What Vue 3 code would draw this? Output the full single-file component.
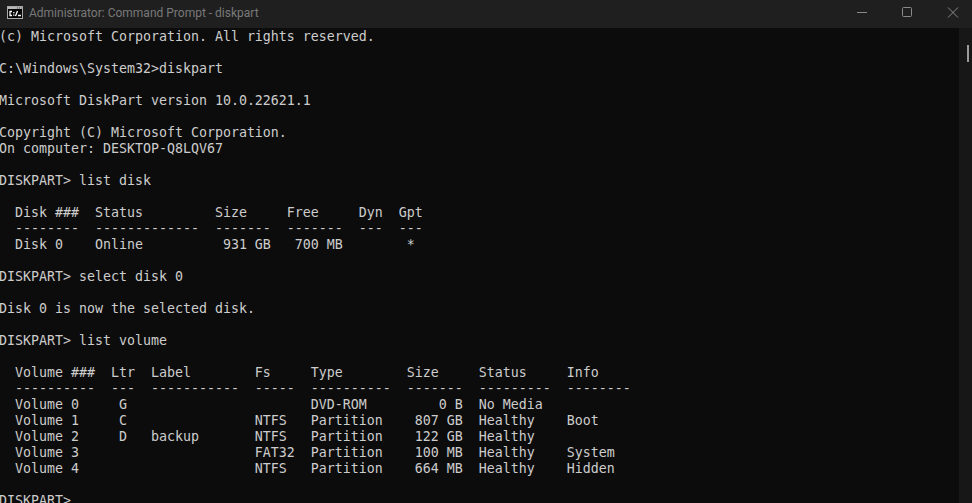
<script setup>
const title = 'Administrator: Command Prompt - diskpart'
const output = `(c) Microsoft Corporation. All rights reserved.

C:\\Windows\\System32>diskpart

Microsoft DiskPart version 10.0.22621.1

Copyright (C) Microsoft Corporation.
On computer: DESKTOP-Q8LQV67

DISKPART> list disk

  Disk ###  Status         Size     Free     Dyn  Gpt
  --------  -------------  -------  -------  ---  ---
  Disk 0    Online          931 GB   700 MB        *

DISKPART> select disk 0

Disk 0 is now the selected disk.

DISKPART> list volume

  Volume ###  Ltr  Label        Fs     Type        Size     Status     Info
  ----------  ---  -----------  -----  ----------  -------  ---------  --------
  Volume 0     G                       DVD-ROM         0 B  No Media
  Volume 1     C                NTFS   Partition    807 GB  Healthy    Boot
  Volume 2     D   backup       NTFS   Partition    122 GB  Healthy
  Volume 3                      FAT32  Partition    100 MB  Healthy    System
  Volume 4                      NTFS   Partition    664 MB  Healthy    Hidden

DISKPART> `
</script>

<template>
  <div class="window">
    <header class="titlebar">
      <div class="title-left">
        <svg class="app-icon" width="16" height="13" viewBox="0 0 16 13">
          <rect x="0.5" y="0.5" width="15" height="12" fill="#050505" stroke="#a8a8a8" />
          <rect x="1" y="1" width="14" height="2" fill="#b8b8b8" />
          <path d="M10 2h1M12 2h1M14 2h.6" stroke="#444" fill="none" />
          <path d="M5 5.5H3V9.5H5M6.8 6v1.2M6.8 8.5v1.2M10.5 5L8.5 10M11 9.5h3" fill="none" stroke="#ffffff" stroke-width="1.3" />
        </svg>
        <span class="title-text">{{ title }}</span>
      </div>
      <div class="controls">
        <svg width="46" height="28" viewBox="0 0 46 28"><path d="M18 12.5H28" stroke="#8a8a8a" fill="none" /></svg>
        <svg width="46" height="28" viewBox="0 0 46 28"><rect x="17.5" y="7.5" width="9" height="9" rx="1" stroke="#8a8a8a" fill="none" /></svg>
        <svg width="46" height="28" viewBox="0 0 46 28"><path d="M17 7.5L27 17.5M27 7.5L17 17.5" stroke="#8a8a8a" fill="none" /></svg>
      </div>
    </header>
    <main class="body">
      <pre class="console">{{ output }}</pre>
      <aside class="scrollbar"><div class="thumb"></div></aside>
    </main>
  </div>
</template>

<style>
html, body { margin: 0; background: #0c0c0c; overflow: hidden; }
</style>

<style scoped>
.window {
  width: 972px;
  height: 503px;
  display: flex;
  flex-direction: column;
  overflow: hidden;
  background: #0c0c0c;
}
.titlebar {
  flex: 0 0 28px;
  display: flex;
  justify-content: space-between;
  background: #1f1f1f;
}
.title-left {
  display: flex;
  align-items: center;
  gap: 6px;
  padding: 0 0 3px 7px;
}
.app-icon { flex: none; }
.title-text {
  font: 12px/16px Roboto, "Noto Sans", sans-serif;
  color: #797979;
  white-space: nowrap;
}
.controls { display: flex; margin-right: -5px; }
.controls svg { display: block; }
.body {
  flex: 1;
  min-height: 0;
  display: flex;
  overflow: hidden;
}
.console {
  flex: 1;
  margin: 0 0 0 -1px;
  padding-top: 1px;
  font: 13.29px/16px "DejaVu Sans Mono", monospace;
  color: #cccccc;
  white-space: pre;
  overflow: hidden;
}
.scrollbar {
  flex: 0 0 13px;
  background: #171717;
  position: relative;
}
.thumb {
  position: absolute;
  left: 8px;
  top: 17px;
  width: 2px;
  height: 17px;
  background: #9b9b9b;
}
</style>
